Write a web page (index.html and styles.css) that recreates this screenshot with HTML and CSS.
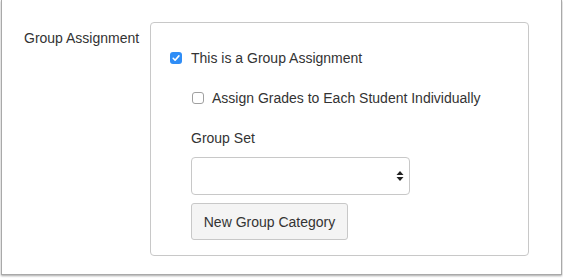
FILE: index.html
```html
<!DOCTYPE html>
<html>
<head>
<meta charset="utf-8">
<link rel="stylesheet" href="styles.css">
</head>
<body>
<div class="frame">
  <div class="row">
    <div class="label">Group Assignment</div>
    <div class="panel">
      <label class="check main">
        <span class="box checked"><svg width="12" height="12" viewBox="0 0 12 12"><path d="M3.2 6.3 L5.1 8.2 L8.9 3.9" fill="none" stroke="#fff" stroke-width="1.6" stroke-linecap="round" stroke-linejoin="round"/></svg></span>
        <span>This is a Group Assignment</span>
      </label>
      <label class="check sub">
        <span class="box"></span>
        <span>Assign Grades to Each Student Individually</span>
      </label>
      <div class="field-label">Group Set</div>
      <div class="select">
        <svg class="arrows" width="8" height="12" viewBox="0 0 8 12"><path d="M4 1 L7.5 5 L0.5 5 Z M4 11 L7.5 7 L0.5 7 Z" fill="#222"/></svg>
      </div>
      <button class="btn">New Group Category</button>
    </div>
  </div>
</div>
</body>
</html>
```
FILE: styles.css
```css
html, body {
  margin: 0;
  padding: 0;
  background: #fff;
}
body {
  font-family: "Liberation Sans", Arial, sans-serif;
  font-size: 14px;
  color: #333;
  width: 563px;
  height: 278px;
  overflow: hidden;
}
.frame {
  margin-left: 1px;
  width: 561px;
  height: 275px;
  border: 1px solid #a9a9a9;
  border-top: none;
  box-sizing: border-box;
  box-shadow: 0 1px 2px rgba(0,0,0,0.35);
  background: #fff;
}
.row {
  display: flex;
  padding-top: 22px;
}
.label {
  width: 126px;
  padding-left: 22px;
  padding-top: 8px;
  line-height: 16px;
}
.panel {
  width: 379px;
  height: 234px;
  box-sizing: border-box;
  border: 1px solid #c8c8c8;
  border-radius: 4px;
  padding: 27px 0 0 19px;
}
.check {
  display: flex;
  align-items: center;
  line-height: 16px;
}
.check.sub {
  margin-top: 24px;
  margin-left: 22px;
}
.box {
  width: 12px;
  height: 12px;
  box-sizing: border-box;
  border: 1px solid #a0a0a0;
  border-radius: 3px;
  background: #fff;
  margin-right: 8px;
  flex: none;
}
.box.checked {
  border: none;
  background: #2f8df6;
  margin-right: 9px;
}
.box svg {
  display: block;
}
.field-label {
  margin-top: 24px;
  margin-left: 21px;
  line-height: 16px;
}
.select {
  margin-top: 11px;
  margin-left: 21px;
  width: 219px;
  height: 38px;
  box-sizing: border-box;
  border: 1px solid #c8c8c8;
  border-radius: 4px;
  background: #fff;
  position: relative;
}
.arrows {
  position: absolute;
  right: 5px;
  top: 12px;
}
.btn {
  display: block;
  margin-top: 8px;
  margin-left: 21px;
  width: 157px;
  height: 37px;
  box-sizing: border-box;
  border: 1px solid #c8c8c8;
  border-radius: 3px;
  background: #f4f4f4;
  font-family: inherit;
  font-size: 14px;
  color: #333;
  padding: 0;
}
```
